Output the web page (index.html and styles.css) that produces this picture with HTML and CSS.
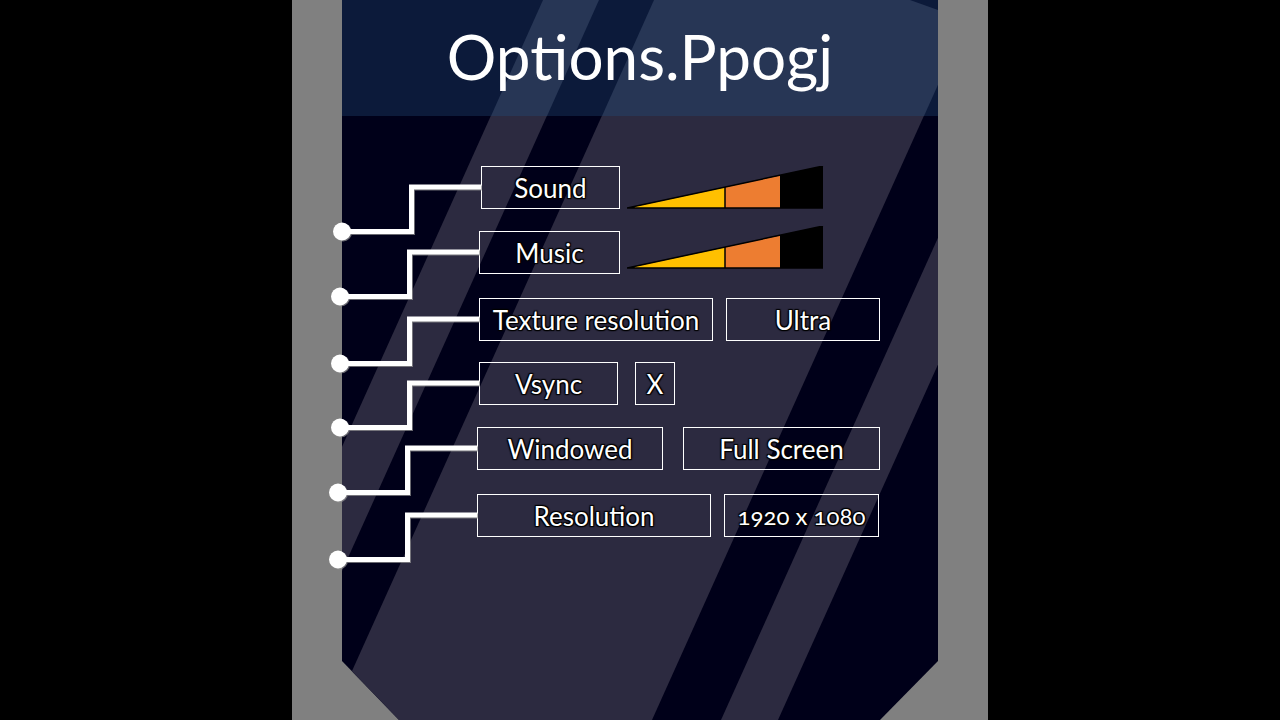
FILE: index.html
```html
<!DOCTYPE html>
<html lang="en">
<head>
  <meta charset="UTF-8" />
  <meta name="viewport" content="width=device-width, initial-scale=1.0"/>
  <title>Options</title>
  <link rel="stylesheet" href="styles.css">
</head>
<body>

  <div class="frame">
    <div class="panel">

      <!-- background: dark panel, diagonal stripes, chamfered bottom -->
      <svg class="panel-bg" viewBox="0 0 596 720" width="596" height="720">
        <defs>
          <clipPath id="panel-shape">
            <polygon points="0,0 596,0 596,661 538,720 57,720 0,661"/>
          </clipPath>
        </defs>
        <g clip-path="url(#panel-shape)">
          <rect width="596" height="720" fill="#000019"/>
          <polygon fill="#2c2a40" points="201,0 257,0 -67,720 -123,720"/>
          <polygon fill="#2c2a40" points="312,0 634,0 310,720 -12,720"/>
          <polygon fill="#2c2a40" points="703,0 760,0 436,720 379,720"/>
          <rect width="596" height="116" fill="#0c1a3a"/>
          <polygon fill="#273655" points="201,0 257,0 205,116 149,116"/>
          <polygon fill="#273655" points="312,0 634,0 582,116 260,116"/>
          <polygon fill="#0c1a3a" points="568,0 596,0 596,10"/>
        </g>
      </svg>

      <header class="title-bar">
        <h1>Options.Ppogj</h1>
      </header>

      <div class="options">

        <div class="row first">
          <svg class="wire" viewBox="0 0 137 43" width="137" height="43">
            <path d="M-2 65.5 H67.5 V21 H137"/>
            <circle cx="-2" cy="65.5" r="9"/>
          </svg>
          <div class="box w-sound">Sound</div>
          <svg class="slider" viewBox="0 0 197 43" width="197" height="43">
            <polygon fill="#000" points="0,42 196,0 196,42"/>
            <polygon fill="#ffc000" points="1,42 98,21.2 98,42"/>
            <polygon fill="#ed7d31" points="98,21.2 153,9.4 153,42 98,42"/>
            <path d="M0 42 L196 0 M0 42 H196 M98 21 V42" stroke="#000" stroke-width="1.5" fill="none"/>
          </svg>
        </div>

        <div class="row">
          <svg class="wire" viewBox="0 0 137 43" width="137" height="43">
            <path d="M-2 65.5 H67.5 V21 H137"/>
            <circle cx="-2" cy="65.5" r="9"/>
          </svg>
          <div class="box w-music">Music</div>
          <svg class="slider raised" viewBox="0 0 197 43" width="197" height="43">
            <polygon fill="#000" points="0,42 196,0 196,42"/>
            <polygon fill="#ffc000" points="1,42 98,21.2 98,42"/>
            <polygon fill="#ed7d31" points="98,21.2 153,9.4 153,42 98,42"/>
            <path d="M0 42 L196 0 M0 42 H196 M98 21 V42" stroke="#000" stroke-width="1.5" fill="none"/>
          </svg>
        </div>

        <div class="row gap-l">
          <svg class="wire" viewBox="0 0 137 43" width="137" height="43">
            <path d="M-2 65.5 H67.5 V21 H137"/>
            <circle cx="-2" cy="65.5" r="9"/>
          </svg>
          <div class="box w-wide">Texture resolution</div>
          <div class="box w-ultra">Ultra</div>
        </div>

        <div class="row gap-s">
          <svg class="wire" viewBox="0 0 137 43" width="137" height="43">
            <path d="M-2 65.5 H67.5 V21 H137"/>
            <circle cx="-2" cy="65.5" r="9"/>
          </svg>
          <div class="box w-vsync">Vsync</div>
          <div class="box w-check">X</div>
        </div>

        <div class="row shift">
          <svg class="wire" viewBox="0 0 137 43" width="137" height="43">
            <path d="M-2 65.5 H67.5 V21 H137"/>
            <circle cx="-2" cy="65.5" r="9"/>
          </svg>
          <div class="box w-windowed">Windowed</div>
          <div class="box w-full">Full Screen</div>
        </div>

        <div class="row shift gap-l">
          <svg class="wire" viewBox="0 0 137 43" width="137" height="43">
            <path d="M-2 65.5 H67.5 V21 H137"/>
            <circle cx="-2" cy="65.5" r="9"/>
          </svg>
          <div class="box w-wide">Resolution</div>
          <div class="box w-res">1920 x 1080</div>
        </div>

      </div>
    </div>
  </div>

</body>
</html>
```

FILE: styles.css
```css
body { margin: 0; background: #000; font-family: Lato, "Open Sans", sans-serif; color: #fff; }

.frame {
  width: 596px; height: 720px; margin: 0 auto; padding: 0 50px;
  background: #808080; overflow: hidden;
}
.panel { position: relative; width: 596px; height: 720px; }
.panel-bg { position: absolute; top: 0; left: 0; z-index: 0; }

.title-bar {
  position: relative; z-index: 1;
  height: 116px; display: flex; justify-content: center; align-items: flex-start;
}
.title-bar h1 {
  margin: 25px 0 0; font-weight: 400; font-size: 62px; line-height: 1;
}

.options {
  position: relative; z-index: 1;
  display: flex; flex-direction: column; gap: 22px;
  padding-top: 51px;
}
.row { display: flex; align-items: flex-end; height: 43px; }
.row.first { margin-top: -1px; margin-left: 2px; }
.row.shift { margin-left: -2px; }
.row.gap-l { margin-top: 2px; }
.row.gap-s { margin-top: -1px; }

.wire { flex: none; overflow: visible; filter: drop-shadow(1px 1px 0 rgba(150,150,150,0.7)); }
.wire path { fill: none; stroke: #fff; stroke-width: 5; stroke-linejoin: miter; }
.wire circle { fill: #fff; }

.box {
  box-sizing: border-box; height: 43px; flex: none;
  border: 1px solid #fff;
  display: flex; align-items: center; justify-content: center;
  font-size: 26px; white-space: nowrap;
  text-shadow: 0 0 2px #000, 1px 1px 1px #000, -1px -1px 1px #000, 1px -1px 1px #000, -1px 1px 1px #000;
}
.box + .box { margin-left: 13px; }

.w-sound { width: 139px; }
.w-music { width: 141px; }
.w-wide { width: 234px; }
.w-ultra { width: 154px; }
.w-vsync { width: 139px; margin-right: 4px; }
.w-check { width: 40px; }
.w-windowed { width: 186px; margin-right: 7px; }
.w-full { width: 197px; }
.w-res { width: 155px; font-size: 24px; font-variant-numeric: oldstyle-nums; }

.slider { flex: none; margin-left: 7px; }
.slider.raised { margin-bottom: 5px; }
```
